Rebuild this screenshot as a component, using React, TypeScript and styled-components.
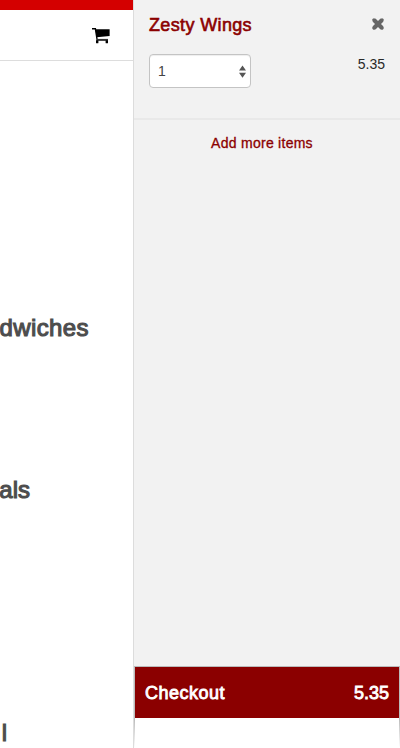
import React from 'react';
import styled, { createGlobalStyle } from 'styled-components';

const Global = createGlobalStyle`
  * { box-sizing: border-box; }
  body { margin: 0; background: #fff; overflow: hidden; font-family: "Liberation Sans", Arial, sans-serif; }
`;

const Screen = styled.div`
  display: grid;
  grid-template-columns: 133px 267px;
  height: 748px;
  overflow: hidden;
`;

const Menu = styled.main`
  overflow: hidden;
`;

const Header = styled.header`
  display: flex;
  justify-content: flex-end;
  height: 61px;
  padding: 18px 23px 0 0;
  border-top: 10px solid #d40000;
  border-bottom: 1px solid #ddd;
`;

const Category = styled.h2<{ $gap: number; $right: number; $spacing?: number }>`
  width: ${p => p.$right}px;
  height: 28px;
  margin: ${p => p.$gap}px 0 0;
  display: flex;
  justify-content: flex-end;
  font-size: 24px;
  line-height: 28px;
  font-weight: 400;
  letter-spacing: ${p => p.$spacing ?? 0}px;
  -webkit-text-stroke: 1.1px #4d4d4d;
  color: #4d4d4d;
  white-space: nowrap;
`;

const Cart = styled.aside`
  display: flex;
  flex-direction: column;
  border-left: 1px solid #dcdcdc;
  background: #f2f2f2;
`;

const Item = styled.section`
  height: 120px;
  padding: 14px 15px 0;
  border-bottom: 2px solid #e9e9e9;
`;

const Row = styled.div<{ $gap?: number }>`
  display: flex;
  justify-content: space-between;
  align-items: flex-start;
  margin-top: ${p => p.$gap ?? 0}px;
`;

const ItemName = styled.h3`
  margin: 0;
  font-size: 18px;
  line-height: 22px;
  font-weight: 400;
  letter-spacing: 0.36px;
  color: #8b0000;
  -webkit-text-stroke: 0.6px #8b0000;
`;

const RemoveButton = styled.button`
  display: flex;
  margin: 4px 0 0;
  padding: 0;
  border: 0;
  background: none;
`;

const Quantity = styled.div`
  display: flex;
  align-items: center;
  justify-content: space-between;
  width: 102px;
  height: 34px;
  padding: 0 4px 0 8px;
  border: 1px solid #c4c4c4;
  border-radius: 4px;
  background: #fff;
  box-shadow: inset 0 1px 1px rgba(0, 0, 0, 0.07);
  font-size: 14px;
  color: #444;
`;

const Price = styled.span`
  padding-top: 2px;
  font-size: 14px;
  line-height: 16px;
  color: #292929;
`;

const AddLink = styled.a`
  margin-top: 15px;
  padding-right: 10px;
  text-align: center;
  font-size: 14px;
  line-height: 16px;
  color: #8b0000;
  letter-spacing: 0.27px;
  -webkit-text-stroke: 0.3px #8b0000;
`;

const Footer = styled.footer`
  height: 82px;
  margin-top: auto;
  padding: 0 1px;
  border-top: 1px solid #bbb;
  background: linear-gradient(#bbb 0 51px, #bbb 52px, #fff 81px);
`;

const FooterBody = styled.div`
  height: 81px;
  background: #fff;
`;

const Checkout = styled.button`
  display: flex;
  align-items: center;
  justify-content: space-between;
  width: 100%;
  height: 51px;
  padding: 1px 10px 0;
  border: 0;
  background: #8b0000;
  color: #fff;
  font-family: inherit;
  font-size: 18px;
  -webkit-text-stroke: 0.85px #fff;
`;

const CheckoutLabel = styled.span`
  letter-spacing: 0.5px;
`;

const CartIcon = () => (
  <svg width="18" height="16" viewBox="0 0 18 16">
    <path d="M0 0.8H3.4L5 11" fill="none" stroke="#000" strokeWidth="1.4" />
    <path d="M3.4 1.3H17.6V8L4.7 9.2Z" fill="#000" />
    <path d="M4.2 10.9H16V12.9H4.2Z" fill="#333" />
    <rect x="4" y="12.3" width="2.4" height="3" rx=".5" />
    <rect x="13.6" y="12.3" width="2.4" height="3" rx=".5" />
  </svg>
);

const CloseIcon = () => (
  <svg width="14" height="12" viewBox="0 0 14 12">
    <path d="M3 2L11 10M11 2L3 10" stroke="#666" strokeWidth="4.1" />
    <path d="M3 2L11 10M11 2L3 10" stroke="#666" strokeWidth="3.4" strokeLinecap="round" />
  </svg>
);

const SelectArrows = () => (
  <svg width="7" height="13" viewBox="0 0 7 13">
    <path d="M3.5 0.5L7 5.5H0ZM0 7.7H7L3.5 12.7Z" fill="#555" />
  </svg>
);

export default function App() {
  return (
    <Screen>
      <Global />
      <Menu>
        <Header><CartIcon /></Header>
        <Category $gap={253} $right={89} $spacing={0.4}>dwiches</Category>
        <Category $gap={134} $right={30}>als</Category>
        <Category $gap={215} $right={7}>l</Category>
      </Menu>
      <Cart>
        <Item>
          <Row>
            <ItemName>Zesty Wings</ItemName>
            <RemoveButton aria-label="Remove"><CloseIcon /></RemoveButton>
          </Row>
          <Row $gap={18}>
            <Quantity>1<SelectArrows /></Quantity>
            <Price>5.35</Price>
          </Row>
        </Item>
        <AddLink>Add more items</AddLink>
        <Footer>
          <FooterBody>
            <Checkout><CheckoutLabel>Checkout</CheckoutLabel><span>5.35</span></Checkout>
          </FooterBody>
        </Footer>
      </Cart>
    </Screen>
  );
}
